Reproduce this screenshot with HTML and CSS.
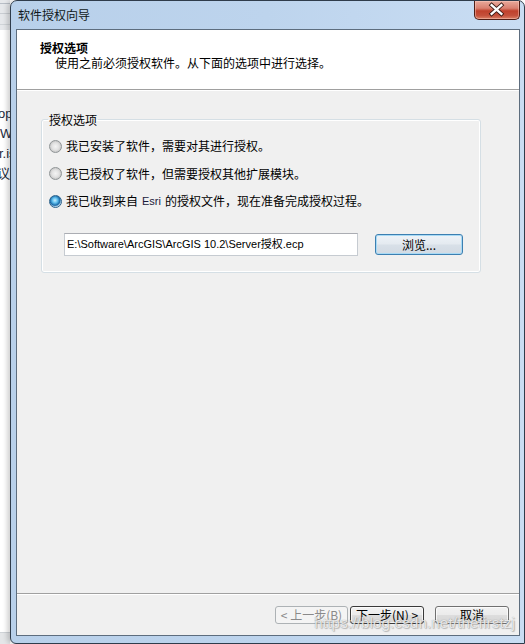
FILE: index.html
```html
<!DOCTYPE html>
<html lang="zh-CN">
<head>
<meta charset="utf-8">
<title>软件授权向导</title>
<link rel="stylesheet" href="styles.css">
</head>
<body>
<div class="desk">
  <div class="bgpage">
    <div class="bg-top"></div>
    <div class="bg-text">
      <p class="l1">op</p>
      <p class="l2">Wi</p>
      <p class="l3">r.is</p>
      <p class="l4">议.</p>
    </div>
    <div class="bg-bottom"></div>
  </div>
  <div class="window">
    <div class="titlebar">
      <span class="title">软件授权向导</span>
      <div class="close">
        <svg width="46" height="19" viewBox="0 0 46 19">
          <path d="M18 5 L28 14 M28 5 L18 14" stroke="#3a1a14" stroke-width="4.2" stroke-linecap="square"/>
          <path d="M18 5 L28 14 M28 5 L18 14" stroke="#ffffff" stroke-width="2.4" stroke-linecap="square"/>
        </svg>
      </div>
    </div>
    <div class="client">
      <div class="header">
        <div class="h-title">授权选项</div>
        <div class="h-sub">使用之前必须授权软件。从下面的选项中进行选择。</div>
      </div>
      <div class="content">
        <fieldset class="group">
          <legend>授权选项</legend>
          <label class="radio"><span class="dot"></span>我已安装了软件，需要对其进行授权。</label>
          <label class="radio"><span class="dot"></span>我已授权了软件，但需要授权其他扩展模块。</label>
          <label class="radio"><span class="dot on"></span>我已收到来自 <span class="esri">Esri</span> 的授权文件，现在准备完成授权过程。</label>
          <div class="file-row">
            <div class="input">E:\Software\ArcGIS\ArcGIS 10.2\Server授权.ecp</div>
            <div class="btn browse">浏览...</div>
          </div>
        </fieldset>
      </div>
      <div class="footer">
        <div class="btn disabled">&lt; 上一步(B)</div>
        <div class="btn next">下一步(N) &gt;</div>
        <div class="btn cancel">取消</div>
      </div>
      <div class="watermark">https://blog.csdn.net/thefirstzj</div>
    </div>
  </div>
</div>
</body>
</html>
```

FILE: styles.css
```css
html, body {
  margin: 0;
  padding: 0;
  width: 525px;
  height: 644px;
  overflow: hidden;
}

body {
  font-family: "Noto Sans CJK SC", "Liberation Sans", sans-serif;
  font-size: 12px;
  color: #000;
  background: #ffffff;
}

.desk {
  display: flex;
  height: 644px;
}

/* desktop / page behind the dialog */
.bgpage {
  width: 10px;
  flex: none;
  overflow: hidden;
  display: flex;
  flex-direction: column;
  background: #ffffff;
}

.bg-top {
  height: 30px;
  flex: none;
  background:
    linear-gradient(to bottom, transparent 3px, #b8bec6 3px, #b8bec6 4px, transparent 4px,
      transparent 13px, #c9cdd2 13px, #c9cdd2 14px, transparent 14px,
      transparent 24px, #d0d4d8 24px, #d0d4d8 25px, transparent 25px),
    #e6e8eb;
}

.bg-text {
  flex: 1;
  padding-top: 74px;
  font-family: "Liberation Sans", "Noto Sans CJK SC", sans-serif;
  font-size: 13px;
  color: #1b2a3c;
}

.bg-text p {
  margin: 0;
  height: 20px;
  line-height: 20px;
  white-space: nowrap;
}

.bg-text .l1 { margin-left: -2px; }
.bg-text .l2 { margin-left: 0; }
.bg-text .l3 { margin-left: -1px; }
.bg-text .l4 { margin-left: -3px; }

.bg-bottom {
  height: 11px;
  flex: none;
  background: #e4e6e8;
  border-top: 1px solid #cfd3d7;
}

/* dialog window */
.window {
  width: 515px;
  height: 644px;
  box-sizing: border-box;
  flex: none;
  border: 1px solid #2f3c4b;
  border-bottom-left-radius: 6px;
  border-top-left-radius: 7px;
  border-top-right-radius: 7px;
  padding: 0 4px 7px 5px;
  display: flex;
  flex-direction: column;
  background: linear-gradient(to right, #b8d0ea 0%, #bdd4ed 50%, #c9ddf3 100%);
  box-shadow: -3px 0 5px rgba(0, 0, 0, 0.18);
}

.titlebar {
  height: 28px;
  flex: none;
  display: flex;
  align-items: flex-start;
}

.title {
  margin: 6px 0 0 2px;
  line-height: 16px;
  font-size: 12px;
  color: #101820;
}

.close {
  margin-left: auto;
  width: 46px;
  height: 19px;
  box-sizing: border-box;
  border: 1px solid #4f1e16;
  border-top: none;
  border-radius: 0 0 5px 5px;
  background: linear-gradient(to bottom, #e9a99b 0%, #d98070 40%, #c0412c 55%, #c4503b 80%, #db7f64 100%);
  box-shadow: inset 0 0 0 1px rgba(255, 210, 200, 0.45);
  display: flex;
  align-items: center;
  justify-content: center;
  overflow: hidden;
}

.close svg {
  display: block;
  margin-left: -1px;
  margin-top: -1px;
}

.client {
  position: relative;
  height: 607px;
  box-sizing: border-box;
  border: 1px solid #5d6d7e;
  background: #f0f0f0;
  display: flex;
  flex-direction: column;
}

.header {
  height: 60px;
  box-sizing: border-box;
  flex: none;
  background: #ffffff;
  border-bottom: 1px solid #a0a0a0;
  padding: 10px 0 0 23px;
  box-shadow: 0 1px 0 #ffffff;
}

.h-title {
  font-weight: bold;
  line-height: 15px;
}

.h-sub {
  line-height: 15px;
  padding-left: 15px;
}

.content {
  flex: 1;
  padding-top: 22px;
}

.group {
  margin: 0 38px 0 24px;
  padding: 11px 7px 16px 7px;
  border: 1px solid #d5dfe5;
  border-radius: 3px;
  box-shadow: inset 0 0 0 1px #ffffff;
  display: flex;
  flex-direction: column;
  gap: 11.5px;
}

.group legend {
  margin-left: -1px;
  padding: 0 1px;
  line-height: 15px;
  font-size: 12px;
}

.radio {
  display: flex;
  align-items: center;
  height: 16px;
  gap: 4px;
  line-height: 16px;
}

.dot {
  width: 13px;
  height: 13px;
  box-sizing: border-box;
  border-radius: 50%;
  border: 1px solid #8f9496;
  background: radial-gradient(circle at 50% 50%, #f4f4f4 0, #e2e2e2 45%, #cbcbcb 70%, #f6f6f6 100%);
  flex: none;
  position: relative;
}

.dot.on {
  border-color: #2c628b;
  background: radial-gradient(circle at 45% 40%, #c8ecfc 0, #62c1ef 28%, #1a6aa8 55%, #cde3f3 72%, #f3f8fb 100%);
}

.esri {
  font-family: "Liberation Sans", sans-serif;
  font-size: 11px;
  color: #1a1a3a;
}

.file-row {
  display: flex;
  align-items: center;
  margin: 12.5px 0 0 15px;
}

.input {
  width: 294px;
  height: 23px;
  box-sizing: border-box;
  border: 1px solid #c6cbd1;
  border-top-color: #abadb3;
  background: #ffffff;
  padding: 0 0 0 2px;
  font-family: "Liberation Sans", "Noto Sans CJK SC", sans-serif;
  font-size: 11px;
  line-height: 21px;
  white-space: nowrap;
  overflow: hidden;
}

.btn {
  box-sizing: border-box;
  height: 18px;
  border: 1px solid #707070;
  border-radius: 3px;
  background: linear-gradient(to bottom, #f2f2f2 0%, #ebebeb 48%, #dddddd 52%, #d6d6d6 100%);
  box-shadow: inset 0 0 0 1px rgba(255, 255, 255, 0.7);
  font-size: 12px;
  line-height: 16px;
  text-align: center;
  white-space: nowrap;
  color: #000;
}

.browse {
  width: 88px;
  height: 21px;
  line-height: 19px;
  margin-left: 17px;
  border-color: #3c7fb1;
  background: linear-gradient(to bottom, #eef3f8 0%, #e4eaf0 48%, #d8e0e8 52%, #d2dae3 100%);
  box-shadow: inset 0 0 0 1px #a8daf5;
}

.footer {
  height: 42px;
  box-sizing: border-box;
  flex: none;
  border-top: 1px solid #a0a0a0;
  box-shadow: inset 0 1px 0 #ffffff;
  display: flex;
  justify-content: flex-end;
  align-items: flex-start;
  padding: 12px 10px 0 0;
}

.footer .btn {
  width: 74px;
}

.footer .disabled {
  width: 73px;
  border-color: #adb2b5;
  background: #f4f4f4;
  box-shadow: none;
  color: #8a8a8a;
}

.footer .next {
  margin-left: 2px;
  border-color: #3a3a3a;
}

.footer .cancel {
  margin-left: 11px;
}

.watermark {
  position: absolute;
  right: 4px;
  bottom: 4px;
  font-family: "Liberation Sans", sans-serif;
  font-size: 15px;
  letter-spacing: 0.2px;
  color: rgba(255, 255, 255, 0.8);
  text-shadow: 0 0 1px rgba(80, 80, 80, 0.6), 1px 1px 1px rgba(110, 110, 110, 0.4);
  pointer-events: none;
}
```
